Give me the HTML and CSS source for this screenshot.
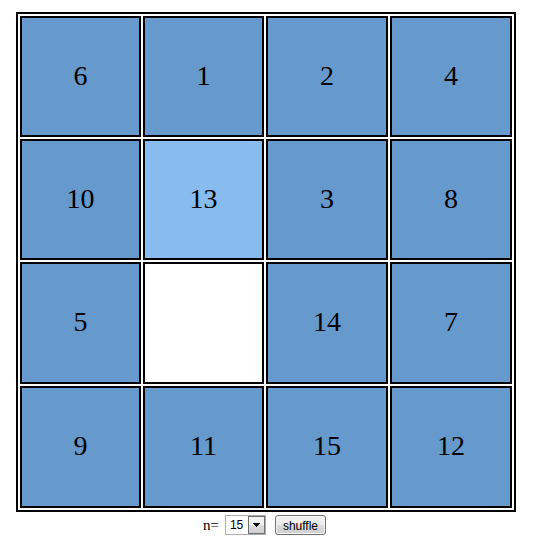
FILE: index.html
```html
<!DOCTYPE html>
<html lang="en">
<head>
<meta charset="utf-8">
<title>Sliding puzzle</title>
<link rel="stylesheet" href="styles.css">
</head>
<body>
<main class="board">
  <button class="tile">6</button>
  <button class="tile">1</button>
  <button class="tile">2</button>
  <button class="tile">4</button>
  <button class="tile">10</button>
  <button class="tile tile-active">13</button>
  <button class="tile">3</button>
  <button class="tile">8</button>
  <button class="tile">5</button>
  <div class="tile tile-empty"></div>
  <button class="tile">14</button>
  <button class="tile">7</button>
  <button class="tile">9</button>
  <button class="tile">11</button>
  <button class="tile">15</button>
  <button class="tile">12</button>
</main>
<form class="controls">
  <label for="size">n=</label>
  <span class="picker">
    <select id="size">
      <option>8</option>
      <option selected>15</option>
      <option>24</option>
    </select>
    <span class="picker-arrow"><svg width="7" height="4" viewBox="0 0 7 4" shape-rendering="crispEdges"><path d="M0 0h7v1h-1v1h-1v1h-1v1h-1v-1h-1v-1h-1v-1h-1z"/></svg></span>
  </span>
  <button class="shuffle" type="button">shuffle</button>
</form>
</body>
</html>
```
FILE: styles.css
```css
* {
  box-sizing: border-box;
}

body {
  margin: 12px 18px 8px 16px;
  background: #fff;
  color: #000;
  font-family: "Liberation Serif", "Times New Roman", serif;
}

.board {
  display: grid;
  grid-template-columns: 121fr 121fr 122fr 122fr;
  grid-template-rows: 121fr 121fr 122fr 122fr;
  gap: 2px;
  max-width: 500px;
  aspect-ratio: 1;
  margin: 0 auto;
  padding: 2px;
  border: 2px solid #000;
}

.tile {
  min-width: 0;
  margin: 0;
  padding: 0 0 2px;
  border: 2px solid #000;
  border-radius: 0;
  background: #69c;
  color: #000;
  font: 28px "Liberation Serif", "Times New Roman", serif;
  cursor: pointer;
}

.tile-active {
  background: #8be;
}

.tile-empty {
  background: #fff;
  cursor: default;
}

.controls {
  display: flex;
  justify-content: center;
  align-items: center;
  margin-top: 3px;
  padding-right: 3px;
  font-size: 15px;
}

.picker {
  position: relative;
  margin: 0 9px 0 6px;
}

select {
  display: block;
  width: 41px;
  height: 20px;
  padding: 0 0 0 4px;
  border: 1px solid #abadb3;
  border-radius: 0;
  appearance: none;
  background: #fff;
  color: #000;
  font: 12px "Liberation Sans", Arial, sans-serif;
}

.picker-arrow {
  position: absolute;
  top: 1px;
  right: 1px;
  bottom: 1px;
  display: flex;
  justify-content: center;
  align-items: center;
  width: 17px;
  border: 1px solid #707070;
  background: linear-gradient(#f2f2f2 50%, #ddd 50%, #cfcfcf);
  pointer-events: none;
}

.shuffle {
  height: 20px;
  padding: 1px 7px 0;
  border: 1px solid #707070;
  border-radius: 3px;
  background: linear-gradient(#f2f2f2, #ebebeb 50%, #ddd 50%, #cfcfcf);
  box-shadow: inset 0 0 0 1px #f8f8f8;
  color: #000;
  font: 12px "Liberation Sans", Arial, sans-serif;
}
```
